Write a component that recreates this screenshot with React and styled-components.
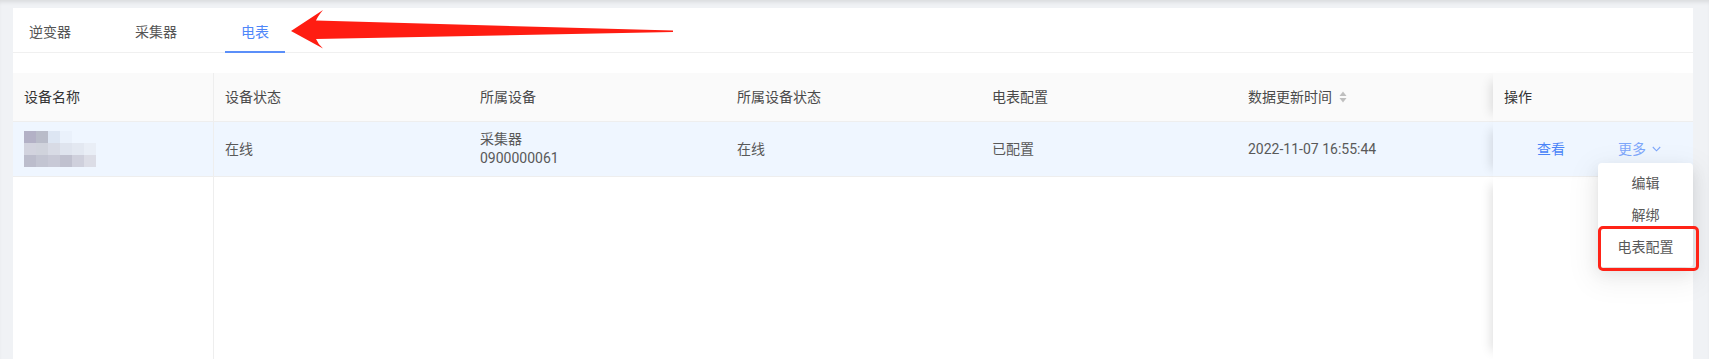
import React from 'react'
import styled, { createGlobalStyle } from 'styled-components'

const GlobalStyle = createGlobalStyle`
	html, body {
		margin: 0;
		padding: 0;
	}
	body {
		background: #f0f2f5;
		font-family: Roboto, "Noto Sans CJK SC", sans-serif;
		font-size: 14px;
		color: #595959;
	}
`

const Page = styled.div`
	position: relative;
	height: 100vh;
	box-sizing: border-box;
	padding: 8px 16px 0 13px;
	box-shadow: inset 0 4px 4px -2px rgba(0, 0, 0, 0.1);
	overflow: hidden;
`

const Card = styled.div`
	background: #fff;
	height: 100%;
	display: flex;
	flex-direction: column;
`

const TabBar = styled.div`
	display: flex;
	height: 44px;
	border-bottom: 1px solid #f0f0f0;
`

const Tab = styled.div`
	position: relative;
	display: flex;
	align-items: center;
	padding: 2px 16px 0;
	margin-right: 32px;
	color: ${p => (p.$active ? '#4f87f9' : '#555')};
	&::after {
		content: '';
		position: absolute;
		left: 0;
		right: 0;
		bottom: -1px;
		height: 2px;
		background: ${p => (p.$active ? '#5b8ff9' : 'transparent')};
	}
`

const Table = styled.div`
	flex: 1;
	margin-top: 20px;
	display: grid;
	grid-template-columns: 201px 255px 257px 255px 256px 256px 200px;
	grid-template-rows: 49px 55px 1fr;
`

const Cell = styled.div`
	position: relative;
	display: flex;
	flex-direction: column;
	justify-content: center;
	padding: 0 11px;
	line-height: 19px;
	border-bottom: ${p => (p.$filler ? 'none' : '1px solid #eeeeee')};
	background: ${p => (p.$head ? '#fafafa' : p.$hover ? '#eff6ff' : '#fff')};
	color: ${p => (p.$head ? (p.$dark ? '#333' : '#4a4a4a') : '#595959')};
	grid-column: ${p => (p.$span ? `span ${p.$span}` : 'auto')};
	${p => p.$fixedLeft && 'border-right: 1px solid #eeeeee;'}
	${p => p.$fixedRight && 'box-shadow: -10px 0 10px -8px rgba(0, 0, 0, 0.13); z-index: 1;'}
`

const HeadLabel = styled.div`
	display: flex;
	align-items: center;
	gap: 7px;
`

const Actions = styled(Cell)`
	flex-direction: row;
	justify-content: flex-start;
	align-items: center;
	padding-left: 44px;
	gap: 53px;
	z-index: 3;
`

const Link = styled.span`
	display: inline-flex;
	align-items: center;
	gap: 6px;
	color: ${p => (p.$soft ? '#7ea7fb' : '#4a84f7')};
	cursor: pointer;
`

const Dropdown = styled.div`
	position: absolute;
	right: 0;
	top: 41px;
	width: 95px;
	padding: 4px 0;
	background: #fff;
	border-radius: 4px;
	box-shadow: 0 3px 6px -4px rgba(0, 0, 0, 0.12), 0 6px 16px 0 rgba(0, 0, 0, 0.08),
		0 9px 28px 8px rgba(0, 0, 0, 0.05);
`

const MenuItem = styled.div`
	height: 32px;
	line-height: 32px;
	text-align: center;
	color: #595959;
`

const Highlight = styled.div`
	position: absolute;
	left: 0;
	top: 63px;
	width: 101px;
	height: 45px;
	box-sizing: border-box;
	border: 3px solid #ff2317;
	border-radius: 5px;
`

const Arrow = styled.svg`
	position: absolute;
	left: 285px;
	top: 5px;
`

const SortIcon = () => (
	<svg width="8" height="12" viewBox="0 0 8 12">
		<path d="M0.5 5 L4 0.5 L7.5 5 Z" fill="#bfbfbf" />
		<path d="M0.5 7 L4 11.5 L7.5 7 Z" fill="#bfbfbf" />
	</svg>
)

const Chevron = () => (
	<svg width="9" height="6" viewBox="0 0 9 6">
		<path d="M0.8 1 L4.5 4.8 L8.2 1" fill="none" stroke="#7ea7fb" strokeWidth="1.1" />
	</svg>
)

const mosaic = [
	['#b3b1c6', '#b9bcc9', '#dde6f3', '#eaf1fb', '#eff6ff', '#eff6ff'],
	['#d2d3de', '#d0d3dc', '#d8dbe5', '#dfe4ee', '#e3e8f1', '#e9eef6'],
	['#bcbdcc', '#c3c5d2', '#c8c9d6', '#c0c1cf', '#cfd0dc', '#dcdde6'],
]

const Mosaic = () => (
	<svg width="72" height="36" viewBox="0 0 72 36">
		{mosaic.map((row, r) =>
			row.map((c, i) => <rect key={`${r}-${i}`} x={i * 12} y={r * 12} width="12" height="12" fill={c} />)
		)}
	</svg>
)

const headers = ['设备状态', '所属设备', '所属设备状态', '电表配置']

export default function App() {
	return (
		<Page>
			<GlobalStyle />
			<Card>
				<TabBar>
					<Tab>逆变器</Tab>
					<Tab>采集器</Tab>
					<Tab $active>电表</Tab>
				</TabBar>

				<Table>
					<Cell $head $dark $fixedLeft>设备名称</Cell>
					{headers.map(h => (
						<Cell $head key={h}>{h}</Cell>
					))}
					<Cell $head>
						<HeadLabel>
							数据更新时间
							<SortIcon />
						</HeadLabel>
					</Cell>
					<Cell $head $dark $fixedRight>操作</Cell>

					<Cell $hover $fixedLeft>
						<Mosaic />
					</Cell>
					<Cell $hover>在线</Cell>
					<Cell $hover>
						<span>采集器</span>
						<span>0900000061</span>
					</Cell>
					<Cell $hover>在线</Cell>
					<Cell $hover>已配置</Cell>
					<Cell $hover>2022-11-07 16:55:44</Cell>
					<Actions $hover $fixedRight>
						<Link>查看</Link>
						<Link $soft>
							更多
							<Chevron />
						</Link>
						<Dropdown>
							<MenuItem>编辑</MenuItem>
							<MenuItem>解绑</MenuItem>
							<MenuItem>电表配置</MenuItem>
							<Highlight />
						</Dropdown>
					</Actions>

					<Cell $filler $fixedLeft />
					<Cell $filler $span={5} />
					<Cell $filler $fixedRight />
				</Table>
			</Card>

			<Arrow width="395" height="50" viewBox="0 0 395 50">
				<path
					d="M6 26 L38 5 Q33 11 31 15.5 L388 25.5 L388 27 L31 34 Q33 39 38 43.5 Z"
					fill="#ff1d12"
				/>
			</Arrow>
		</Page>
	)
}
